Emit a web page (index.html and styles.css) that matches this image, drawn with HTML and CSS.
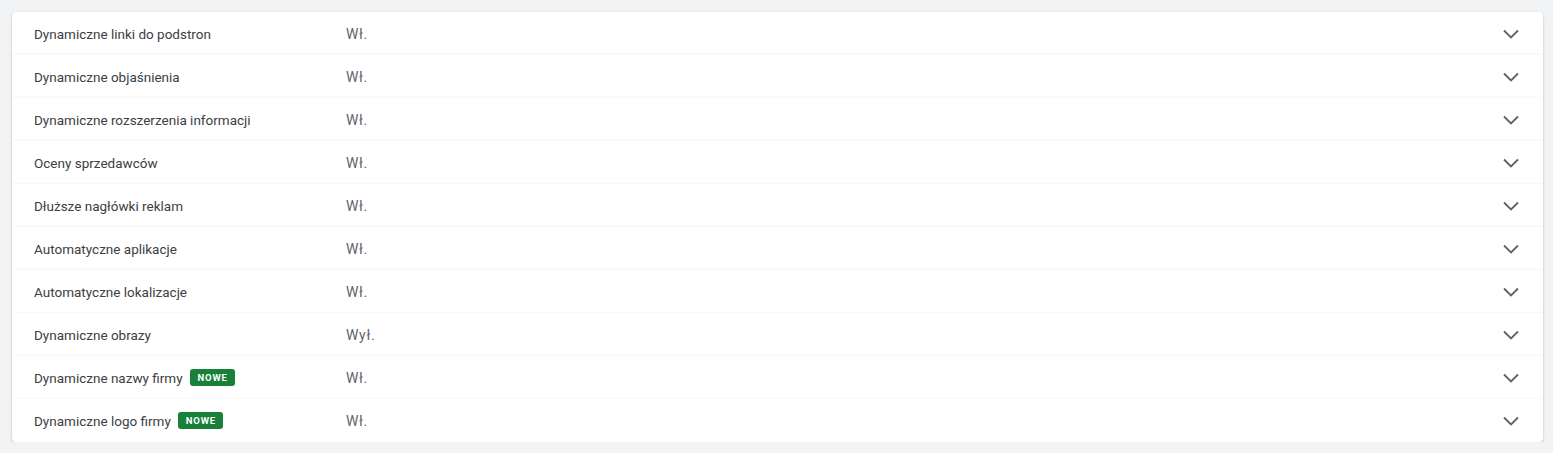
FILE: index.html
```html
<!DOCTYPE html>
<html lang="pl">
<head>
<meta charset="utf-8">
<link rel="stylesheet" href="styles.css">
</head>
<body>
<div class="list">
  <div class="panel"><div class="label">Dynamiczne linki do podstron</div><div class="value">Wł.</div><svg class="chev" viewBox="0 0 24 24"><polyline points="5,8.5 12,15.5 19,8.5"/></svg></div>
  <div class="panel"><div class="label">Dynamiczne objaśnienia</div><div class="value">Wł.</div><svg class="chev" viewBox="0 0 24 24"><polyline points="5,8.5 12,15.5 19,8.5"/></svg></div>
  <div class="panel"><div class="label">Dynamiczne rozszerzenia informacji</div><div class="value">Wł.</div><svg class="chev" viewBox="0 0 24 24"><polyline points="5,8.5 12,15.5 19,8.5"/></svg></div>
  <div class="panel"><div class="label">Oceny sprzedawców</div><div class="value">Wł.</div><svg class="chev" viewBox="0 0 24 24"><polyline points="5,8.5 12,15.5 19,8.5"/></svg></div>
  <div class="panel"><div class="label">Dłuższe nagłówki reklam</div><div class="value">Wł.</div><svg class="chev" viewBox="0 0 24 24"><polyline points="5,8.5 12,15.5 19,8.5"/></svg></div>
  <div class="panel"><div class="label">Automatyczne aplikacje</div><div class="value">Wł.</div><svg class="chev" viewBox="0 0 24 24"><polyline points="5,8.5 12,15.5 19,8.5"/></svg></div>
  <div class="panel"><div class="label">Automatyczne lokalizacje</div><div class="value">Wł.</div><svg class="chev" viewBox="0 0 24 24"><polyline points="5,8.5 12,15.5 19,8.5"/></svg></div>
  <div class="panel"><div class="label">Dynamiczne obrazy</div><div class="value">Wył.</div><svg class="chev" viewBox="0 0 24 24"><polyline points="5,8.5 12,15.5 19,8.5"/></svg></div>
  <div class="panel"><div class="label">Dynamiczne nazwy firmy <span class="badge">NOWE</span></div><div class="value">Wł.</div><svg class="chev" viewBox="0 0 24 24"><polyline points="5,8.5 12,15.5 19,8.5"/></svg></div>
  <div class="panel"><div class="label">Dynamiczne logo firmy <span class="badge">NOWE</span></div><div class="value">Wł.</div><svg class="chev" viewBox="0 0 24 24"><polyline points="5,8.5 12,15.5 19,8.5"/></svg></div>
</div>
</body>
</html>
```
FILE: styles.css
```css
html, body {
  margin: 0;
  background: #f1f3f4;
}
body {
  padding: 12px 10px 0 12px;
  font-family: Roboto, "Liberation Sans", Arial, sans-serif;
  font-size: 13.5px;
}
.list {
  display: flex;
  flex-direction: column;
}
.panel {
  position: relative;
  display: flex;
  align-items: center;
  height: 43px;
  box-sizing: border-box;
  padding: 0 20px 0 22px;
  background: #fff;
  box-shadow: 0 1px 1px rgba(60,64,67,.14), 0 1px 3px rgba(60,64,67,.22);
}
.panel:first-child {
  border-radius: 4px 4px 0 0;
}
.panel:last-child {
  border-radius: 0 0 4px 4px;
}
.label {
  width: 312px;
  color: #3c4043;
  display: flex;
  align-items: center;
}
.value {
  flex: 1;
  color: #5f6368;
  font-size: 14px;
  letter-spacing: 0.7px;
}
.badge {
  display: inline-block;
  margin-left: 7px;
  padding: 0 7px 0 8px;
  height: 17px;
  line-height: 17px;
  border-radius: 3px;
  background: #188038;
  color: #fff;
  font-size: 9.5px;
  font-weight: 700;
  letter-spacing: 0.8px;
}
.chev {
  width: 24px;
  height: 24px;
  fill: none;
  stroke: #5f6368;
  stroke-width: 1.9;
}
```
